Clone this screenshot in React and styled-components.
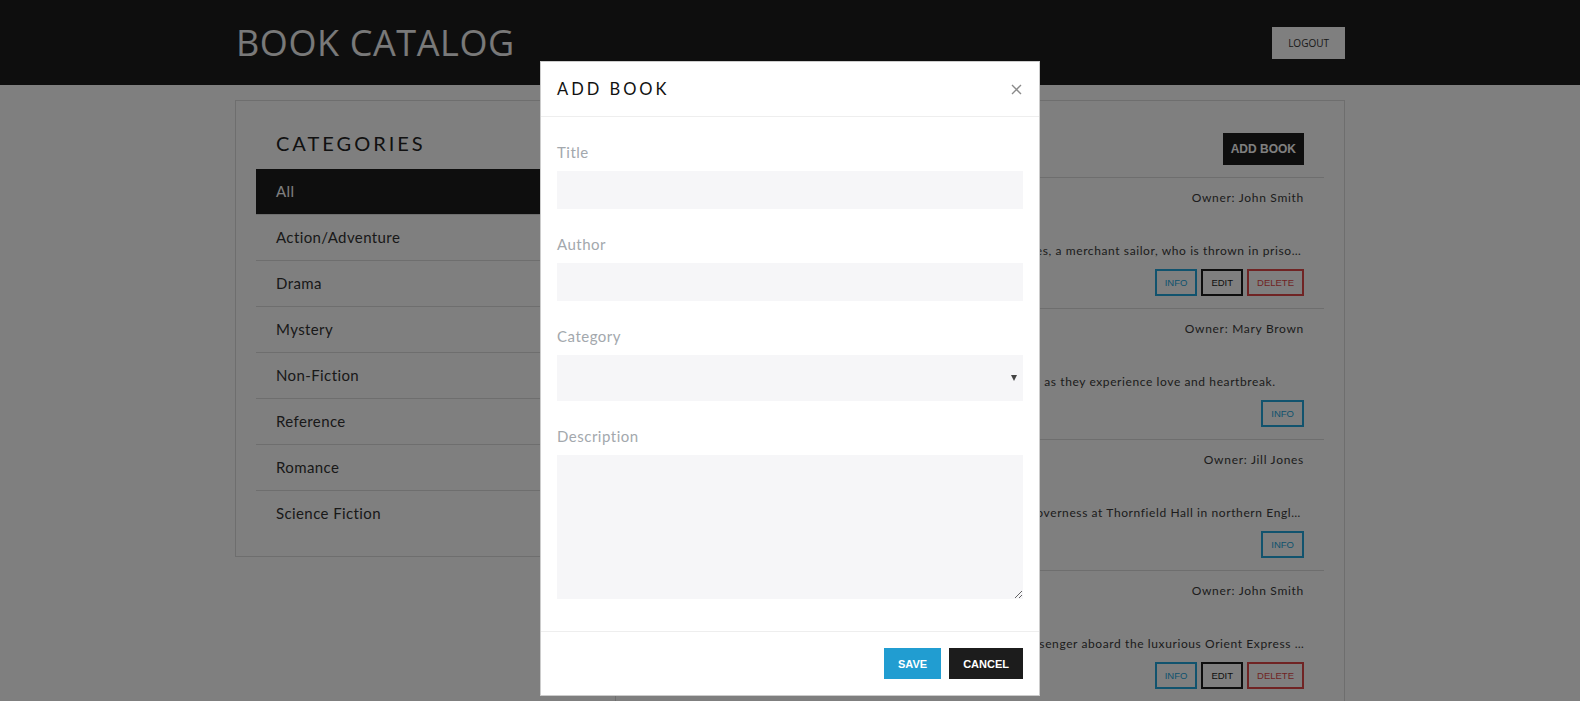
import React from "react";
import styled, { createGlobalStyle } from "styled-components";

const GlobalStyle = createGlobalStyle`
  body {
    margin: 0;
    background: #fff;
    font-family: "Lato", "Open Sans", sans-serif;
    color: #333;
  }
  * { box-sizing: border-box; }
`;

const TopBar = styled.header`
  background: #1c1c1c;
  height: 85px;
`;

const Container = styled.div`
  width: 1110px;
  margin: 0 auto;
`;

const TopBarInner = styled(Container)`
  height: 100%;
  display: flex;
  justify-content: space-between;
  align-items: center;
`;

const Brand = styled.h1`
  margin: 0;
  font-family: "Open Sans", sans-serif;
  font-weight: 400;
  font-size: 36px;
  letter-spacing: 0.6px;
  color: #f2f2f2;
  padding-left: 1px;
`;

const LogoutButton = styled.button`
  height: 32px;
  padding: 0 16px;
  border: none;
  background: #fff;
  color: #333;
  font-family: "Open Sans", sans-serif;
  font-size: 10px;
`;

const Main = styled(Container)`
  margin-top: 15px;
  display: grid;
  grid-template-columns: 365px minmax(0, 1fr);
  gap: 15px;
  align-items: start;
`;

const Panel = styled.section`
  border: 1px solid #ddd;
  padding: 20px;
  min-width: 0;
`;

const SidebarTitle = styled.h2`
  margin: 0;
  padding: 8px 20px 12px;
  font-size: 20px;
  line-height: 28px;
  font-weight: 400;
  letter-spacing: 3px;
  color: #222;
`;

const CategoryList = styled.ul`
  list-style: none;
  margin: 0;
  padding: 0;
`;

const CategoryItem = styled.li`
  padding: 12px 20px;
  font-size: 15px;
  line-height: 21px;
  letter-spacing: 0.4px;
  border-bottom: 1px solid #ddd;
  background: ${(p) => (p.$active ? "#1c1c1c" : "transparent")};
  color: ${(p) => (p.$active ? "#fff" : "#333")};
  &:last-child { border-bottom: none; }
`;

const PanelHeader = styled.div`
  display: flex;
  justify-content: space-between;
  align-items: center;
  padding: 12px 20px;
  border-bottom: 1px solid #ddd;
`;

const PanelTitle = styled.h2`
  margin: 0;
  font-size: 20px;
  font-weight: 400;
  letter-spacing: 3px;
  color: #222;
`;

const DarkButton = styled.button`
  height: ${(p) => p.$h || 32}px;
  padding: 0 ${(p) => p.$px || 8}px;
  border: none;
  background: ${(p) => p.$bg || "#1c1c1c"};
  color: #fff;
  font-family: "Liberation Sans", Arial, sans-serif;
  font-weight: 700;
  font-size: ${(p) => p.$fs || 12}px;
`;

const BookItem = styled.article`
  padding: 12px 20px;
  border-bottom: 1px solid #ddd;
`;

const BookTop = styled.div`
  display: flex;
  justify-content: space-between;
  align-items: flex-start;
  height: 24px;
`;

const BookTitle = styled.h3`
  margin: 0;
  font-size: 18px;
  line-height: 24px;
  font-weight: 400;
  color: #222;
`;

const Owner = styled.span`
  font-size: 12px;
  line-height: 16px;
  letter-spacing: 0.7px;
  color: #3a3a3a;
`;

const Author = styled.div`
  margin: 4px 0;
  font-size: 13px;
  line-height: 20px;
  color: #777;
`;

const Description = styled.p`
  margin: 0;
  font-size: 12px;
  line-height: 18px;
  letter-spacing: 0.6px;
  color: #3a3a3a;
  white-space: nowrap;
  overflow: hidden;
  text-overflow: ellipsis;
`;

const ActionRow = styled.div`
  margin-top: 9px;
  display: flex;
  justify-content: flex-end;
  gap: 4px;
`;

const OutlineButton = styled.button`
  height: 27px;
  padding: 0 8px;
  background: transparent;
  border: 2px solid ${(p) => p.$color};
  color: ${(p) => p.$color};
  font-family: "Liberation Sans", Arial, sans-serif;
  font-size: 9.5px;
`;

const Backdrop = styled.div`
  position: fixed;
  inset: 0;
  background: rgba(0, 0, 0, 0.5);
  overflow: auto;
`;

const Dialog = styled.div`
  width: 500px;
  margin: 61px auto 0;
  background: #fff;
  border: 1px solid rgba(0, 0, 0, 0.2);
`;

const DialogHeader = styled.div`
  display: flex;
  justify-content: space-between;
  align-items: center;
  padding: 15px 16px;
  border-bottom: 1px solid #eee;
`;

const DialogTitle = styled.h4`
  margin: 0;
  font-size: 16.5px;
  line-height: 24px;
  font-weight: 400;
  letter-spacing: 3px;
  color: #111;
`;

const CloseButton = styled.button`
  border: none;
  background: none;
  padding: 0;
  margin-right: 1px;
  display: flex;
`;

const DialogBody = styled.div`
  padding: 24px 16px 8px;
`;

const FormGroup = styled.div`
  margin-bottom: 24px;
`;

const Label = styled.label`
  display: block;
  margin-bottom: 8px;
  font-size: 15px;
  line-height: 22px;
  letter-spacing: 0.5px;
  color: #a3a8ad;
`;

const fieldBase = `
  display: block;
  width: 100%;
  border: none;
  background: #f6f6f8;
  font-family: "Lato", sans-serif;
  font-size: 14px;
  outline: none;
`;

const Input = styled.input`
  ${fieldBase}
  height: 38px;
  padding: 0 12px;
`;

const SelectWrap = styled.div`
  position: relative;
  &::after {
    content: "";
    position: absolute;
    right: 6px;
    top: 20px;
    border-left: 3.5px solid transparent;
    border-right: 3.5px solid transparent;
    border-top: 6px solid #444;
  }
`;

const Select = styled.select`
  ${fieldBase}
  height: 46px;
  padding: 0 12px;
  appearance: none;
`;

const TextArea = styled.textarea`
  ${fieldBase}
  height: 144px;
  padding: 8px 12px;
  resize: vertical;
`;

const DialogFooter = styled.div`
  display: flex;
  justify-content: flex-end;
  gap: 8px;
  padding: 16px;
  border-top: 1px solid #eee;
`;

const categories = [
  "All",
  "Action/Adventure",
  "Drama",
  "Mystery",
  "Non-Fiction",
  "Reference",
  "Romance",
  "Science Fiction",
];

const books = [
  {
    title: "The Count of Monte Cristo",
    author: "Alexandre Dumas",
    owner: "John Smith",
    mine: true,
    text: "An epic adventure story about the sad brave young Edmond Dantes, a merchant sailor, who is thrown in prison for a crime he did not commit.",
  },
  {
    title: "Little Women",
    author: "Louisa May Alcott",
    owner: "Mary Brown",
    text: "Tells of the lives of the four March sisters, Meg, Jo, Beth and Amy, as they experience love and heartbreak.",
  },
  {
    title: "Jane Eyre",
    author: "Charlotte Bronte",
    owner: "Jill Jones",
    text: "The sole young orphan, Jane Eyre, grows up to become the new governess at Thornfield Hall in northern England, where she falls in love.",
  },
  {
    title: "Murder on the Orient Express",
    author: "Agatha Christie",
    owner: "John Smith",
    mine: true,
    text: "Detective Hercule Poirot investigates the murder of a wealthy passenger aboard the luxurious Orient Express train.",
  },
];

const CloseIcon = () => (
  <svg width="11" height="11" viewBox="0 0 11 11">
    <path d="M1 1 L10 10 M10 1 L1 10" stroke="#8a8a8a" strokeWidth="1.4" fill="none" />
  </svg>
);

export default function App() {
  return (
    <>
      <GlobalStyle />
      <TopBar>
        <TopBarInner>
          <Brand>BOOK CATALOG</Brand>
          <LogoutButton>LOGOUT</LogoutButton>
        </TopBarInner>
      </TopBar>

      <Main>
        <Panel>
          <SidebarTitle>CATEGORIES</SidebarTitle>
          <CategoryList>
            {categories.map((c, i) => (
              <CategoryItem key={c} $active={i === 0}>
                {c}
              </CategoryItem>
            ))}
          </CategoryList>
        </Panel>

        <Panel>
          <PanelHeader>
            <PanelTitle>BOOKS</PanelTitle>
            <DarkButton>ADD BOOK</DarkButton>
          </PanelHeader>
          {books.map((b) => (
            <BookItem key={b.title}>
              <BookTop>
                <BookTitle>{b.title}</BookTitle>
                <Owner>Owner: {b.owner}</Owner>
              </BookTop>
              <Author>{b.author}</Author>
              <Description>{b.text}</Description>
              <ActionRow>
                <OutlineButton $color="#22a6dc">INFO</OutlineButton>
                {b.mine && <OutlineButton $color="#1c1c1c">EDIT</OutlineButton>}
                {b.mine && <OutlineButton $color="#e04848">DELETE</OutlineButton>}
              </ActionRow>
            </BookItem>
          ))}
        </Panel>
      </Main>

      <Backdrop>
        <Dialog>
          <DialogHeader>
            <DialogTitle>ADD BOOK</DialogTitle>
            <CloseButton aria-label="Close">
              <CloseIcon />
            </CloseButton>
          </DialogHeader>
          <DialogBody>
            <FormGroup>
              <Label>Title</Label>
              <Input />
            </FormGroup>
            <FormGroup>
              <Label>Author</Label>
              <Input />
            </FormGroup>
            <FormGroup>
              <Label>Category</Label>
              <SelectWrap>
                <Select defaultValue="">
                  <option value=""></option>
                  {categories.slice(1).map((c) => (
                    <option key={c}>{c}</option>
                  ))}
                </Select>
              </SelectWrap>
            </FormGroup>
            <FormGroup>
              <Label>Description</Label>
              <TextArea />
            </FormGroup>
          </DialogBody>
          <DialogFooter>
            <DarkButton $bg="#219dd1" $h={31} $px={14} $fs={11}>SAVE</DarkButton>
            <DarkButton $h={31} $px={14} $fs={11}>CANCEL</DarkButton>
          </DialogFooter>
        </Dialog>
      </Backdrop>
    </>
  );
}
